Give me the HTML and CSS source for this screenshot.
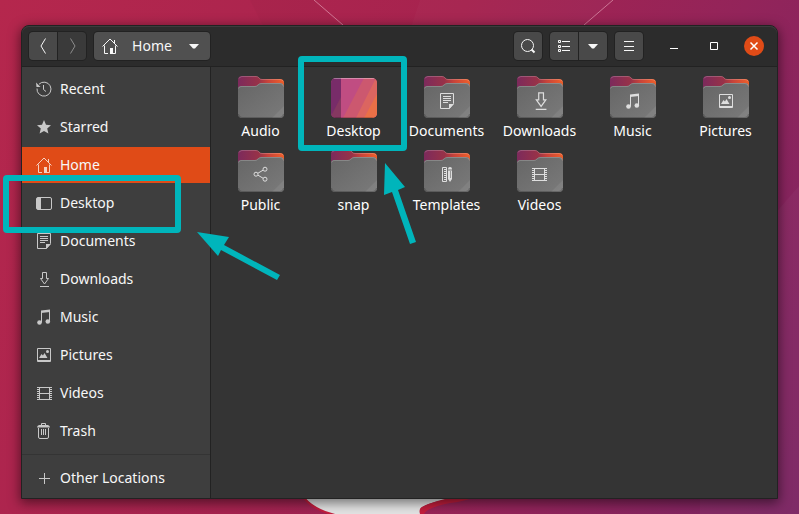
FILE: index.html
```
<!DOCTYPE html>
<html lang="en">
<head>
    <meta charset="utf-8">
    <title>Home</title>
    <link rel="stylesheet" href="styles.css">
</head>
<body>

<!-- icon set -->
<svg class="defs" width="0" height="0" aria-hidden="true">
    <defs>
        <linearGradient id="tab" x1="0" y1="0" x2="1" y2="0">
            <stop offset="0" stop-color="#7c2a5c"/>
            <stop offset=".45" stop-color="#983248"/>
            <stop offset=".65" stop-color="#c8433a"/>
            <stop offset="1" stop-color="#f0602a"/>
        </linearGradient>
        <linearGradient id="front" x1="0" y1="0" x2="1" y2="1">
            <stop offset="0" stop-color="#666"/>
            <stop offset="1" stop-color="#7a7a7a"/>
        </linearGradient>
        <clipPath id="deskclip"><rect y="2" width="46" height="40" rx="5"/></clipPath>
    </defs>
    <symbol id="folder" viewBox="0 0 46 42">
        <path d="M0 20V4q0-4 4-4h14q2 0 3 1.500t3 1.500h18q4 0 4 4v13z" fill="url(#tab)"/>
        <path d="M1 2.500Q2 .5 4 .5h14q2 0 3 1.500t3 1.500h18q2.500 0 3.500 2" fill="none" stroke="#fff" stroke-opacity=".2"/>
        <path d="M0 13q0-3 3-3h14q1.500 0 3-1.500t3-1.500h19q4 0 4 4v27q0 4-4 4H4q-4 0-4-4z" fill="url(#front)"/>
        <path d="M34 42L46 30v8q0 4-4 4z" fill="#fff" fill-opacity=".07"/>
        <path d="M.5 12.500q.5-2 2.500-2h14q1.500 0 3-1.500t3-1.500h19q3 0 3.500 3" fill="none" stroke="#fff" stroke-opacity=".2"/>
        <path d="M.5 38q.5 3.500 3.500 3.500h38q3 0 3.500-3.500" fill="none" stroke="#000" stroke-opacity=".2"/>
    </symbol>
    <symbol id="desktop-big" viewBox="0 0 46 42">
        <g clip-path="url(#deskclip)">
            <rect y="2" width="46" height="40" fill="#c04d82"/>
            <path d="M33 2L12 42h34V2z" fill="#cc586f"/>
            <path d="M46 0L25 42h21z" fill="#db6560"/>
            <path d="M46 18L33 42h13z" fill="#ea7047"/>
            <path d="M0 2h10v40H0z" fill="#782c69"/>
            <path d="M10 21L0 40v2h10z" fill="#853861"/>
            <path d="M0 2.500h46" stroke="#fff" stroke-opacity=".35"/>
            <path d="M0 41.500h46" stroke="#000" stroke-opacity=".2"/>
        </g>
    </symbol>
    <symbol id="recent" viewBox="0 0 16 16">
        <path d="M3 3.200A7 7 0 1 1 1 7.500M7.500 4v4.500l2.500 2" fill="none" stroke="currentColor"/>
        <path d="M0 1.500l.5 4.500h4z" fill="currentColor"/>
    </symbol>
    <symbol id="star" viewBox="0 0 16 16">
        <path d="M8 1l2 4.800 5 .4-3.800 3.300 1.200 5L8 11.900l-4.400 2.600 1.200-5L1 6.200l5-.4z" fill="currentColor"/>
    </symbol>
    <symbol id="home" viewBox="0 0 16 16">
        <path d="M.5 8.500L8 1l7.500 7.500M2.500 7.500v8H6M13.500 7.500v8H11M12.500 2v3" fill="none" stroke="currentColor"/>
        <path d="M8 10h3v6H8z" fill="currentColor"/>
    </symbol>
    <symbol id="desktop" viewBox="0 0 16 16">
        <rect x=".5" y="2.500" width="15" height="12" rx="1.500" fill="none" stroke="currentColor"/>
        <path d="M1 3h4v11H1z" fill="currentColor"/>
    </symbol>
    <symbol id="documents" viewBox="0 0 16 16">
        <path d="M1.500.5h13v10l-4 5h-9zM4 3.500h8M4 5.500h8M4 7.500h8M4 9.500h5" fill="none" stroke="currentColor"/>
        <path d="M10 16v-5h5z" fill="currentColor"/>
    </symbol>
    <symbol id="downloads" viewBox="0 0 16 16">
        <path d="M6.500 1.500h4v6h2L8.500 13l-4-5.500h2zM4 15.500h9" fill="none" stroke="currentColor"/>
    </symbol>
    <symbol id="music" viewBox="0 0 16 16">
        <path d="M5.500 13.500V2.500M13.500 12V2" fill="none" stroke="currentColor"/>
        <path d="M5 1.500L14 .5v2.500L5 4z" fill="currentColor"/>
        <circle cx="3.500" cy="13.500" r="2.300" fill="currentColor"/>
        <circle cx="11.800" cy="12.500" r="2.300" fill="currentColor"/>
    </symbol>
    <symbol id="pictures" viewBox="0 0 16 16">
        <path d="M1.500 1.500h13v13h-13zM1 13.500h14" fill="none" stroke="currentColor"/>
        <path d="M3 11l2.500-4 1.500 1.500L8.500 6l3 5z" fill="currentColor"/>
        <circle cx="11.500" cy="4.500" r="1.500" fill="currentColor"/>
    </symbol>
    <symbol id="videos" viewBox="0 0 16 16">
        <path d="M3.500 2v13M13.500 2v13M3 2.500h11M3 8.500h11M3 14.500h11" fill="none" stroke="currentColor"/>
        <path d="M2 2v13M15 2v13" fill="none" stroke="currentColor" stroke-width="2" stroke-dasharray="1 1"/>
    </symbol>
    <symbol id="trash" viewBox="0 0 16 16">
        <path d="M2.500 5v9q0 1.500 1.500 1.500h7q1.500 0 1.500-1.500V5M5.500 2V.5h4V2M5.500 6v6M7.500 6v6M9.500 6v6" fill="none" stroke="currentColor"/>
        <path d="M1 4.500q0-2 2-2.500h9q2 .5 2 2.500z" fill="currentColor"/>
    </symbol>
    <symbol id="plus" viewBox="0 0 16 16">
        <path d="M8.500 3v11M3 8.500h11" stroke="currentColor"/>
    </symbol>
    <symbol id="share" viewBox="0 0 16 16">
        <path d="M5 7.200l5-3M5 9.200l5 3" stroke="currentColor"/>
        <g fill="none" stroke="currentColor">
            <circle cx="3" cy="8.200" r="2"/>
            <circle cx="12" cy="3.200" r="2"/>
            <circle cx="12" cy="13.200" r="2"/>
        </g>
    </symbol>
    <symbol id="templates" viewBox="0 0 16 16">
        <path d="M3.500 1.500h4v14h-4zM5 3.500h2M5 5.500h2M5 7.500h2M5 9.500h2M5 11.500h2M5 13.500h2" fill="none" stroke="currentColor"/>
        <path d="M9 3.500V3q0-2 2-2t2 2v.5zM9 4.500h4V13l-2 3-2-3z" fill="currentColor"/>
        <path d="M11.500 5v7" stroke="#999"/>
    </symbol>
    <symbol id="caret" viewBox="0 0 16 16">
        <path d="M3 6h10l-4 4.500H7z" fill="currentColor"/>
    </symbol>
</svg>

<svg class="wallpaper" viewBox="0 0 799 514" preserveAspectRatio="none" aria-hidden="true">
    <path d="M420 0h193L470 120H380z" fill="#fff" fill-opacity=".02"/>
    <path d="M250 0h64l40 40h-84z" fill="#000" fill-opacity=".02"/>
    <path d="M799 186L700 300v214h99z" fill="#fff" fill-opacity=".03"/>
    <path d="M314 0l29 25M613 0l-29 25" stroke="#e09ab0" stroke-opacity=".7"/>
    <path d="M304 497q10 12 31 19h86l-1-6q0-6 38-13z" fill="#e4e4e4"/>
    <path d="M304 498q10 12 31 17" fill="none" stroke="#c41e3d" stroke-width="2"/>
    <path d="M420 514q-2-6 4-8 10-5 30-9h20q-8 4-24 6-22 4-26 11z" fill="#c41e3d"/>
</svg>

<main class="window">
    <header class="titlebar">
        <div class="group">
            <button class="btn" aria-label="Back">
                <svg class="icon" viewBox="0 0 16 16"><path d="M10.500 0.500L6 8l4.500 7.500" fill="none" stroke="currentColor"/></svg>
            </button>
            <button class="btn" aria-label="Forward" disabled>
                <svg class="icon" viewBox="0 0 16 16"><path d="M6.500 0.500L11 8l-4.500 7.500" fill="none" stroke="currentColor"/></svg>
            </button>
        </div>
        <div class="group">
            <button class="btn path">
                <svg class="icon"><use href="#home"/></svg>
                <span>Home</span>
                <svg class="icon"><use href="#caret"/></svg>
            </button>
        </div>
        <div class="spacer"></div>
        <div class="group">
            <button class="btn" aria-label="Search">
                <svg class="icon" viewBox="0 0 16 16"><path d="M11.500 11.500l3 3" stroke="currentColor" stroke-width="2"/><circle cx="7.500" cy="7.500" r="6" fill="none" stroke="currentColor"/></svg>
            </button>
        </div>
        <div class="group">
            <button class="btn" aria-label="List view">
                <svg class="icon" viewBox="0 0 16 16"><path d="M6 3.500h8M6 8.500h8M6 12.500h8M2.500 2.500h2v2h-2zM2.500 7.500h2v2h-2zM2.500 11.500h2v2h-2z" fill="none" stroke="currentColor"/></svg>
            </button>
            <button class="btn" aria-label="View options">
                <svg class="icon"><use href="#caret"/></svg>
            </button>
        </div>
        <div class="group">
            <button class="btn" aria-label="Menu">
                <svg class="icon" viewBox="0 0 16 16"><path d="M3 3.500h10M3 8.500h10M3 12.500h10" stroke="currentColor"/></svg>
            </button>
        </div>
        <div class="controls">
            <button class="ctl" aria-label="Minimize">
                <svg class="icon" viewBox="0 0 16 16"><path d="M4 10.500h8" stroke="currentColor"/></svg>
            </button>
            <button class="ctl" aria-label="Maximize">
                <svg class="icon" viewBox="0 0 16 16"><path d="M4.500 4.500h7v7h-7z" fill="none" stroke="currentColor"/></svg>
            </button>
            <button class="ctl close" aria-label="Close">
                <svg class="icon" viewBox="0 0 16 16"><path d="M4.500 4.500l7 7M11.500 4.500l-7 7" stroke="currentColor" stroke-width="1.500"/></svg>
            </button>
        </div>
    </header>

    <div class="body">
        <nav class="sidebar">
            <a class="place" href="#"><svg class="icon"><use href="#recent"/></svg>Recent</a>
            <a class="place" href="#"><svg class="icon"><use href="#star"/></svg>Starred</a>
            <a class="place active" href="#"><svg class="icon"><use href="#home"/></svg>Home</a>
            <a class="place" href="#"><svg class="icon"><use href="#desktop"/></svg>Desktop</a>
            <a class="place" href="#"><svg class="icon"><use href="#documents"/></svg>Documents</a>
            <a class="place" href="#"><svg class="icon"><use href="#downloads"/></svg>Downloads</a>
            <a class="place" href="#"><svg class="icon"><use href="#music"/></svg>Music</a>
            <a class="place" href="#"><svg class="icon"><use href="#pictures"/></svg>Pictures</a>
            <a class="place" href="#"><svg class="icon"><use href="#videos"/></svg>Videos</a>
            <a class="place" href="#"><svg class="icon"><use href="#trash"/></svg>Trash</a>
            <hr class="line">
            <a class="place" href="#"><svg class="icon"><use href="#plus"/></svg>Other Locations</a>
        </nav>

        <section class="files">
            <a class="file" href="#"><svg class="folder"><use href="#folder"/></svg>Audio</a>
            <a class="file" href="#"><svg class="folder"><use href="#desktop-big"/></svg>Desktop</a>
            <a class="file" href="#"><svg class="folder"><use href="#folder"/><use href="#documents" x="15" y="17" width="16" height="16"/></svg>Documents</a>
            <a class="file" href="#"><svg class="folder"><use href="#folder"/><use href="#downloads" x="14" y="15" width="19" height="19"/></svg>Downloads</a>
            <a class="file" href="#"><svg class="folder"><use href="#folder"/><use href="#music" x="15" y="17" width="16" height="16"/></svg>Music</a>
            <a class="file" href="#"><svg class="folder"><use href="#folder"/><use href="#pictures" x="15" y="17" width="16" height="16"/></svg>Pictures</a>
            <a class="file" href="#"><svg class="folder"><use href="#folder"/><use href="#share" x="15" y="16" width="16" height="16"/></svg>Public</a>
            <a class="file" href="#"><svg class="folder"><use href="#folder"/></svg>snap</a>
            <a class="file" href="#"><svg class="folder"><use href="#folder"/><use href="#templates" x="15" y="16" width="16" height="16"/></svg>Templates</a>
            <a class="file" href="#"><svg class="folder"><use href="#folder"/><use href="#videos" x="14" y="16" width="16" height="16"/></svg>Videos</a>
        </section>
    </div>
</main>

<!-- highlight boxes and arrows -->
<svg class="marks" viewBox="0 0 799 514" aria-hidden="true">
    <g fill="none" stroke="#00b5bb" stroke-width="6">
        <rect x="6" y="178" width="172" height="52" rx="1"/>
        <rect x="301" y="59" width="103" height="89" rx="1"/>
    </g>
    <g fill="#00b5bb">
        <path d="M197 232l32 5-5 8 56 30-3 5-56-30-3 6z"/>
        <path d="M385 163l20 24-7 3 18 52-6 2-18-52-8 3z"/>
    </g>
</svg>

</body>
</html>
```
FILE: styles.css
```
* {
    box-sizing: border-box;
}

body {
    margin: 0;
    padding: 25px 21px 15px;
    min-height: 100vh;
    display: flex;
    position: relative;
    overflow: hidden;
    background: linear-gradient(115deg, #b5274d 0%, #a6234f 45%, #93245a 72%, #7a2563 100%);
    color: #f7f7f7;
    font: 14px/20px "Noto Sans", "Open Sans", sans-serif;
}

.defs {
    position: absolute;
}

.wallpaper {
    position: absolute;
    top: 0;
    left: 0;
    width: 100%;
    height: 100%;
}

.marks {
    position: absolute;
    top: 0;
    left: 0;
    width: 799px;
    height: 514px;
    pointer-events: none;
}

.window {
    flex: 1;
    display: flex;
    flex-direction: column;
    position: relative;
    border: 1px solid #222;
    border-radius: 8px 8px 0 0;
    background: #343434;
    box-shadow: 0 3px 12px 1px rgba(0, 0, 0, .5);
}

/* title bar */
.titlebar {
    display: flex;
    align-items: center;
    gap: 6px;
    height: 41px;
    padding: 0 13px 0 6px;
    border-bottom: 1px solid #222;
    border-radius: 7px 7px 0 0;
    background: #2c2c2c;
    box-shadow: inset 0 1px #3c3c3c;
}

.spacer {
    flex: 1;
}

.group {
    display: flex;
    gap: 1px;
    padding: 1px;
    border-radius: 5px;
    background: #222;
}

.btn {
    display: flex;
    align-items: center;
    justify-content: center;
    width: 28px;
    height: 28px;
    padding: 0;
    border: 0;
    background: #494949;
    color: #f7f7f7;
    font: inherit;
}

.btn:first-child {
    border-radius: 4px 0 0 4px;
}

.btn:last-child {
    border-radius: 0 4px 4px 0;
}

.btn:only-child {
    border-radius: 4px;
}

.btn:disabled {
    background: #3a3a3a;
    color: #8c8c8c;
}

.path {
    width: 116px;
    padding: 0 8px;
    gap: 14px;
    background: #505050;
}

.controls {
    display: flex;
    gap: 20px;
    margin-left: 14px;
}

.ctl {
    display: flex;
    align-items: center;
    justify-content: center;
    width: 20px;
    height: 20px;
    padding: 0;
    border: 0;
    border-radius: 50%;
    background: none;
    color: #fff;
}

.close {
    background: #e04b17;
}

.icon {
    width: 16px;
    height: 16px;
    flex: none;
}

/* places */
.body {
    flex: 1;
    display: flex;
}

.sidebar {
    display: flex;
    flex-direction: column;
    gap: 2px;
    width: 189px;
    padding: 4px 0 2px;
    border-right: 1px solid #222;
    background: #3e3e3e;
}

.place {
    display: flex;
    align-items: center;
    gap: 8px;
    height: 36px;
    padding-left: 14px;
    color: inherit;
    text-decoration: none;
}

.place .icon {
    color: #c8c8c8;
}

.active {
    background: #e04b17;
}

.active .icon {
    color: #f6d0c0;
}

.line {
    width: 100%;
    height: 1px;
    margin: 3px 0;
    border: 0;
    background: #343434;
}

/* icon view */
.files {
    flex: 1;
    display: grid;
    grid-template-columns: repeat(auto-fill, minmax(90px, 1fr));
    align-content: start;
    row-gap: 9px;
    padding: 9px 5px 9px 3px;
}

.file {
    display: flex;
    flex-direction: column;
    align-items: center;
    gap: 3px;
    color: #fff;
    text-decoration: none;
}

.folder {
    width: 46px;
    height: 42px;
    color: #dedede;
}
```
